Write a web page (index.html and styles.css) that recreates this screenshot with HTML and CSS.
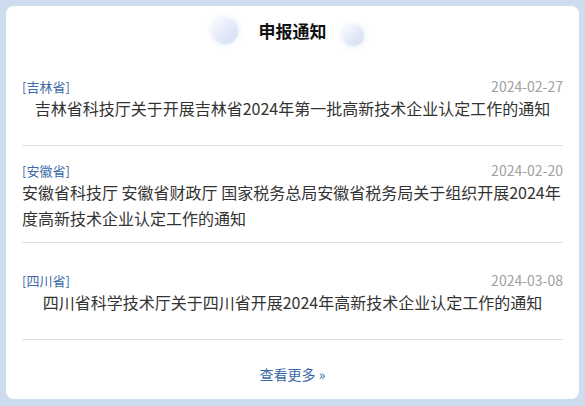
FILE: index.html
```html
<!DOCTYPE html>
<html lang="zh-CN">
<head>
<meta charset="utf-8">
<title>申报通知</title>
<link rel="stylesheet" href="styles.css">
</head>
<body>
<div class="card">
  <div class="header">
    <span class="dot dot-left"></span>
    <h2 class="title">申报通知</h2>
    <span class="dot dot-right"></span>
  </div>
  <ul class="list">
    <li class="item">
      <div class="meta"><span class="tag">[吉林省]</span><span class="date">2024-02-27</span></div>
      <div class="text-wrap"><a class="text">吉林省科技厅关于开展吉林省2024年第一批高新技术企业认定工作的通知</a></div>
    </li>
    <li class="item">
      <div class="meta"><span class="tag">[安徽省]</span><span class="date">2024-02-20</span></div>
      <div class="text-wrap"><a class="text">安徽省科技厅 安徽省财政厅 国家税务总局安徽省税务局关于组织开展2024年度高新技术企业认定工作的通知</a></div>
    </li>
    <li class="item">
      <div class="meta"><span class="tag">[四川省]</span><span class="date">2024-03-08</span></div>
      <div class="text-wrap"><a class="text">四川省科学技术厅关于四川省开展2024年高新技术企业认定工作的通知</a></div>
    </li>
  </ul>
  <div class="footer"><a class="more">查看更多 »</a></div>
</div>
</body>
</html>
```

FILE: styles.css
```css
html, body {
  margin: 0;
  padding: 0;
}
body {
  background: #cedcf0;
  font-family: "Noto Sans CJK SC", "Noto Sans", sans-serif;
  padding: 6px 6px 7px 6px;
  height: 406px;
  box-sizing: border-box;
}
.card {
  background: #fff;
  border-radius: 8px;
  padding: 0 16px;
  height: 393px;
  box-sizing: border-box;
  display: flex;
  flex-direction: column;
}
.header {
  height: 43px;
  padding-top: 13px;
  box-sizing: border-box;
  display: flex;
  justify-content: center;
  align-items: flex-start;
}
.title {
  margin: 0;
  font-size: 17px;
  line-height: 24px;
  font-weight: bold;
  color: #111;
}
.dot {
  border-radius: 50%;
  background: linear-gradient(135deg, #fbfcff 0%, #e6ecf9 45%, #d3ddf3 100%);
  box-shadow: 0 0 4px 2px rgba(235, 240, 252, 0.9);
  flex: none;
}
.dot-left {
  width: 26px;
  height: 26px;
  margin-top: -1px;
  margin-right: 21px;
}
.dot-right {
  width: 21px;
  height: 21px;
  margin-top: 6px;
  margin-left: 16px;
  margin-right: 10px;
}
.list {
  list-style: none;
  margin: 0;
  padding: 0;
}
.item {
  height: 97px;
  box-sizing: border-box;
  border-bottom: 1px solid #dddfe3;
  display: flex;
  flex-direction: column;
  justify-content: center;
  padding-top: 4px;
}
.meta {
  display: flex;
  justify-content: space-between;
  align-items: center;
  height: 17px;
}
.tag {
  font-size: 13px;
  color: #3d6aa8;
  line-height: 17px;
}
.date {
  font-size: 14px;
  color: #a0a0a0;
  line-height: 17px;
}
.text-wrap {
  text-align: center;
}
.text {
  display: inline-block;
  text-align: left;
  font-size: 16px;
  line-height: 26px;
  color: #333;
}
.footer {
  flex: 1;
  display: flex;
  justify-content: center;
  align-items: center;
  padding-top: 8px;
}
.more {
  font-size: 14px;
  color: #3a68a6;
  line-height: 18px;
}
```
